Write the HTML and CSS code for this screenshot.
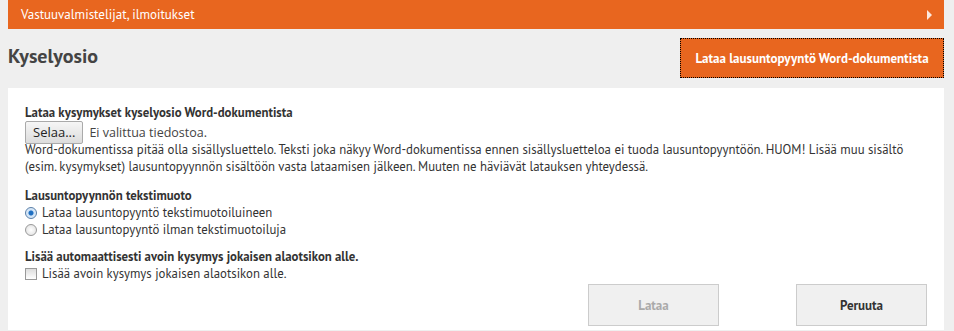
FILE: index.html
```html
<!DOCTYPE html>
<html>
<head>
<meta charset="utf-8">
<title>Kyselyosio</title>
<link rel="stylesheet" href="styles.css">
</head>
<body>
<div class="bar">
<span>Vastuuvalmistelijat, ilmoitukset</span>
<span class="arrow"></span>
</div>
<div class="head">
<h1>Kyselyosio</h1>
<button class="orangeBtn">Lataa lausuntopyyntö Word-dokumentista</button>
</div>
<div class="panel">
<div class="group first">
<div class="label">Lataa kysymykset kyselyosio Word-dokumentista</div>
<div class="fileRow"><span class="browse">Selaa...</span> Ei valittua tiedostoa.</div>
<div class="note">Word-dokumentissa pitää olla sisällysluettelo. Teksti joka näkyy Word-dokumentissa ennen sisällysluetteloa ei tuoda lausuntopyyntöön. HUOM! Lisää muu sisältö (esim. kysymykset) lausuntopyynnön sisältöön vasta lataamisen jälkeen. Muuten ne häviävät latauksen yhteydessä.</div>
</div>
<div class="group">
<div class="label">Lausuntopyynnön tekstimuoto</div>
<div class="opt"><span class="radio on"></span>Lataa lausuntopyyntö tekstimuotoiluineen</div>
<div class="opt"><span class="radio"></span>Lataa lausuntopyyntö ilman tekstimuotoiluja</div>
</div>
<div class="group">
<div class="label">Lisää automaattisesti avoin kysymys jokaisen alaotsikon alle.</div>
<div class="opt"><span class="check"></span>Lisää avoin kysymys jokaisen alaotsikon alle.</div>
</div>
<div class="actions">
<button class="btn" disabled>Lataa</button>
<button class="btn">Peruuta</button>
</div>
</div>
</body>
</html>
```
FILE: styles.css
```css
body {
	margin: 0;
	background-color: #efefef;
	font-family: "PT Sans", "Open Sans", Arial, sans-serif;
	font-size: 12.8px;
	color: #333;
}

.bar {
	margin: 0 10px 0 8px;
	height: 29px;
	background-color: #e8661f;
	color: #fff;
	display: flex;
	align-items: center;
	justify-content: space-between;
	padding: 0 12px 0 13px;
	font-size: 13px;
}

.arrow {
	width: 0;
	height: 0;
	border-top: 5px solid transparent;
	border-bottom: 5px solid transparent;
	border-left: 5px solid #fff;
	opacity: 0.85;
}

.head {
	margin: 0 10px 0 8px;
	display: flex;
	justify-content: space-between;
	align-items: flex-start;
	padding-top: 9px;
	height: 50px;
}

.head h1 {
	margin: 5px 0 0 0;
	font-size: 20px;
	font-weight: bold;
	color: #444;
}

.orangeBtn {
	background-color: #e8661f;
	color: #fff;
	border: 1px dotted #000;
	font-family: inherit;
	font-size: 13px;
	font-weight: bold;
	width: 264px;
	height: 40px;
	padding: 0;
}

.panel {
	margin: 0 10px 0 8px;
	background-color: #fff;
	padding: 16px 17px 4px 17px;
}

.group {
	margin-bottom: 10px;
}

.group.first {
	margin-bottom: 12px;
}

.label {
	font-weight: bold;
	line-height: 17px;
}

.fileRow {
	display: flex;
	align-items: center;
	gap: 6px;
	line-height: 17px;
	margin: 0 0 -3px 0;
	font-family: "Open Sans", Arial, sans-serif;
	font-size: 12.5px;
	color: #444;
}

.browse {
	display: inline-block;
	border: 1px solid #aaa;
	border-radius: 2px;
	background: linear-gradient(#f6f6f6, #dcdcdc);
	padding: 2px 7px;
	font-size: 13px;
	color: #222;
}

.note {
	line-height: 17px;
}

.opt {
	display: flex;
	align-items: center;
	line-height: 17px;
}

.radio {
	width: 10px;
	height: 10px;
	border-radius: 50%;
	border: 1px solid #999;
	background: radial-gradient(#fff, #ddd);
	margin-right: 5px;
}

.radio.on {
	background: radial-gradient(circle, #1e6fc2 0, #1e6fc2 2px, #cfe3f7 3px, #e8f0f8 100%);
	border-color: #5a7fa8;
}

.check {
	width: 10px;
	height: 10px;
	border: 1px solid #999;
	background: linear-gradient(#ddd, #fff);
	margin-right: 5px;
}

.actions {
	display: flex;
	justify-content: flex-end;
	gap: 77px;
	margin-top: -8px;
}

.btn {
	width: 131px;
	height: 42px;
	background-color: #f0f0f0;
	border: 1px solid #ccc;
	font-family: inherit;
	font-size: 13px;
	font-weight: bold;
	color: #333;
}

.btn:disabled {
	color: #aaa;
}
```
